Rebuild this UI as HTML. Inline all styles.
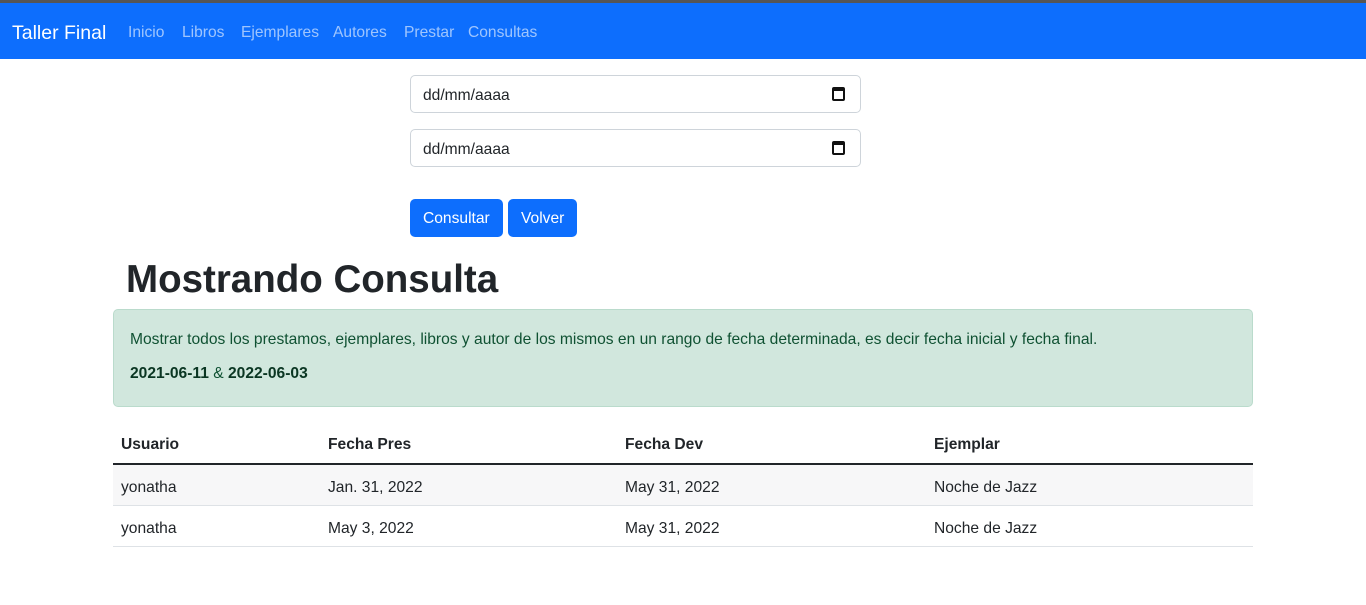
<!DOCTYPE html>
<html><head><meta charset="utf-8"><style>
*{box-sizing:border-box;margin:0;padding:0}
body{width:1366px;height:605px;background:#fff;font-family:"Liberation Sans",sans-serif;color:#212529;position:relative;overflow:hidden;font-size:15.6px}
.top{position:absolute;left:0;top:0;width:1366px;height:3px;background:#555}
.nav{position:absolute;left:0;top:3px;width:1366px;height:56px;background:#0d6efd}
.brand{position:absolute;left:12px;top:19px;color:#fff;font-size:19.5px}
.nl{position:absolute;top:21px;color:rgba(255,255,255,.6);font-size:15.6px}
.inp{position:absolute;left:410px;width:451px;height:38px;border:1px solid #ced4da;border-radius:5px;padding:11px 12px;font-size:15.6px}
.cal{position:absolute;right:15px;top:11px;width:13px;height:14px;border:2px solid #111;border-top-width:4px;border-radius:2px}
.btn{position:absolute;top:199px;height:38px;background:#0d6efd;color:#fff;border-radius:5px;font-size:15.6px;padding:11px 13px}
h1{position:absolute;left:126px;top:258px;font-size:38.5px;font-weight:bold;color:#212529}
.alert{position:absolute;left:113px;top:309px;width:1140px;height:98px;background:#d1e7dd;border:1px solid #badbcc;border-radius:5px;color:#0f5132;padding:21px 16px;font-size:15.6px}
.alert b{color:#0a3622}
.t{position:absolute;left:113px;width:1140px;font-size:15.6px}
.c{position:absolute;top:14px}
</style></head><body>
<div class="top"></div>
<div class="nav">
<span class="brand">Taller Final</span>
<span class="nl" style="left:128px">Inicio</span>
<span class="nl" style="left:182px">Libros</span>
<span class="nl" style="left:241px">Ejemplares</span>
<span class="nl" style="left:333px">Autores</span>
<span class="nl" style="left:404px">Prestar</span>
<span class="nl" style="left:468px">Consultas</span>
</div>
<div class="inp" style="top:75px">dd/mm/aaaa<div class="cal"></div></div>
<div class="inp" style="top:129px">dd/mm/aaaa<div class="cal"></div></div>
<div class="btn" style="left:410px;width:93px">Consultar</div>
<div class="btn" style="left:508px;width:69px">Volver</div>
<h1>Mostrando Consulta</h1>
<div class="alert">Mostrar todos los prestamos, ejemplares, libros y autor de los mismos en un rango de fecha determinada, es decir fecha inicial y fecha final.<div style="margin-top:16px"><b>2021-06-11</b> &amp; <b>2022-06-03</b></div></div>
<div class="t" style="top:422px;height:43px;border-bottom:2px solid #212529;font-weight:bold">
<span class="c" style="left:8px">Usuario</span><span class="c" style="left:215px">Fecha Pres</span><span class="c" style="left:512px">Fecha Dev</span><span class="c" style="left:821px">Ejemplar</span></div>
<div class="t" style="top:465px;height:41px;background:#f7f7f8;border-bottom:1px solid #dee2e6">
<span class="c" style="left:8px">yonatha</span><span class="c" style="left:215px">Jan. 31, 2022</span><span class="c" style="left:512px">May 31, 2022</span><span class="c" style="left:821px">Noche de Jazz</span></div>
<div class="t" style="top:506px;height:41px;border-bottom:1px solid #dee2e6">
<span class="c" style="left:8px">yonatha</span><span class="c" style="left:215px">May 3, 2022</span><span class="c" style="left:512px">May 31, 2022</span><span class="c" style="left:821px">Noche de Jazz</span></div>
</body></html>
